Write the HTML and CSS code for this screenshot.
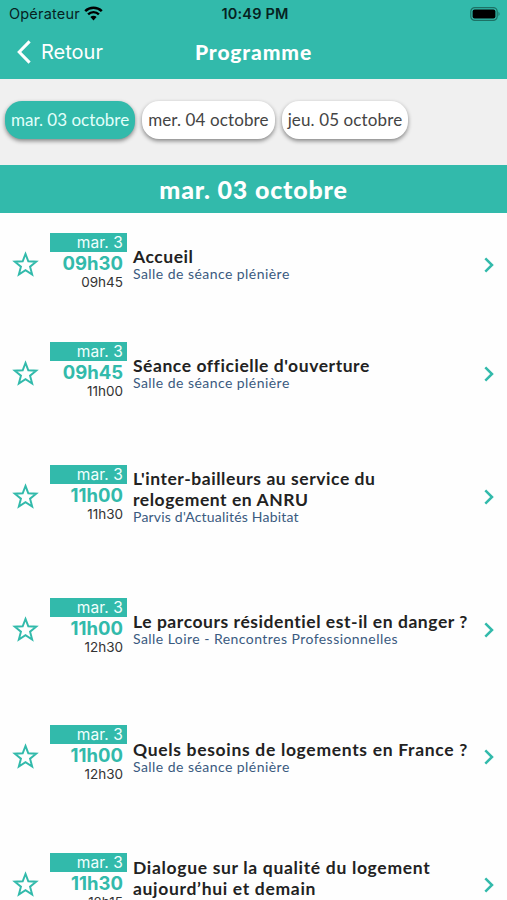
FILE: index.html
```
<!DOCTYPE html>
<html lang="fr">
<head>
<meta charset="utf-8">
<title>Programme</title>
<link rel="stylesheet" href="styles.css">
</head>
<body>

<svg class="defs" width="0" height="0">
  <symbol id="star" viewBox="0 0 26 26">
    <path d="M13 2.8 L15.7 9.9 L23.3 10.3 L17.4 15.1 L19.4 22.7 L13 18.5 L6.6 22.7 L8.6 15.1 L2.7 10.3 L10.3 9.9 Z" fill="none" stroke="currentColor" stroke-width="1.9"/>
  </symbol>
  <symbol id="chevron" viewBox="0 0 10 16">
    <path d="M1.3 1.4 L8 8 L1.3 14.6" fill="none" stroke="currentColor" stroke-width="2.5"/>
  </symbol>
</svg>

<header>
  <div class="status">
    <div class="carrier">
      <span>Opérateur</span>
      <svg width="19" height="15" viewBox="0 0 19 15">
        <path d="M1.2 5.1 A11.8 11.8 0 0 1 17.8 5.1" fill="none" stroke="#000" stroke-width="2.5"/>
        <path d="M4.1 8.4 A7.6 7.6 0 0 1 14.9 8.4" fill="none" stroke="#000" stroke-width="2.4"/>
        <path d="M9.5 14.4 L6.4 11.1 A4.4 4.4 0 0 1 12.6 11.1 Z" fill="#000"/>
      </svg>
    </div>
    <div class="clock">10:49 PM</div>
    <div class="battery">
      <svg width="31" height="14" viewBox="0 0 31 14">
        <rect x="0.8" y="0.6" width="26.4" height="12.8" rx="4" fill="none" stroke="#1d7165" stroke-width="1.2"/>
        <rect x="2.6" y="2.4" width="22.8" height="9.2" rx="2" fill="#000"/>
        <path d="M28.5 4.8 Q30.6 7 28.5 9.2 Z" fill="#1d7165"/>
      </svg>
    </div>
  </div>
  <nav>
    <a class="back">
      <svg width="16" height="24" viewBox="0 0 16 24">
        <path d="M14.6 1.4 L4.2 12 L14.6 22.6" fill="none" stroke="#fff" stroke-width="3"/>
      </svg>
      <span>Retour</span>
    </a>
    <h1>Programme</h1>
    <span></span>
  </nav>
</header>

<div class="days">
  <a class="day active">mar. 03 octobre</a>
  <a class="day">mer. 04 octobre</a>
  <a class="day">jeu. 05 octobre</a>
</div>

<h2>mar. 03 octobre</h2>

<ul class="sessions">
  <li>
    <svg class="star"><use href="#star"/></svg>
    <div class="slot">
      <div class="date">mar. 3</div>
      <div class="start">09h30</div>
      <div class="end">09h45</div>
    </div>
    <div class="info">
      <h3>Accueil</h3>
      <p>Salle de séance plénière</p>
    </div>
    <svg class="chevron"><use href="#chevron"/></svg>
  </li>
  <li>
    <svg class="star"><use href="#star"/></svg>
    <div class="slot">
      <div class="date">mar. 3</div>
      <div class="start">09h45</div>
      <div class="end">11h00</div>
    </div>
    <div class="info">
      <h3>Séance officielle d'ouverture</h3>
      <p>Salle de séance plénière</p>
    </div>
    <svg class="chevron"><use href="#chevron"/></svg>
  </li>
  <li>
    <svg class="star"><use href="#star"/></svg>
    <div class="slot">
      <div class="date">mar. 3</div>
      <div class="start">11h00</div>
      <div class="end">11h30</div>
    </div>
    <div class="info">
      <h3>L'inter-bailleurs au service du<br>relogement en ANRU</h3>
      <p class="narrow">Parvis d'Actualités Habitat</p>
    </div>
    <svg class="chevron"><use href="#chevron"/></svg>
  </li>
  <li>
    <svg class="star"><use href="#star"/></svg>
    <div class="slot">
      <div class="date">mar. 3</div>
      <div class="start">11h00</div>
      <div class="end">12h30</div>
    </div>
    <div class="info">
      <h3>Le parcours résidentiel est-il en danger ?</h3>
      <p>Salle Loire - Rencontres Professionnelles</p>
    </div>
    <svg class="chevron"><use href="#chevron"/></svg>
  </li>
  <li>
    <svg class="star"><use href="#star"/></svg>
    <div class="slot">
      <div class="date">mar. 3</div>
      <div class="start">11h00</div>
      <div class="end">12h30</div>
    </div>
    <div class="info">
      <h3 class="wide">Quels besoins de logements en France ?</h3>
      <p>Salle de séance plénière</p>
    </div>
    <svg class="chevron"><use href="#chevron"/></svg>
  </li>
  <li>
    <svg class="star"><use href="#star"/></svg>
    <div class="slot">
      <div class="date">mar. 3</div>
      <div class="start">11h30</div>
      <div class="end">12h15</div>
    </div>
    <div class="info last">
      <h3 class="wide">Dialogue sur la qualité du logement<br>aujourd’hui et demain</h3>
    </div>
    <svg class="chevron"><use href="#chevron"/></svg>
  </li>
</ul>

</body>
</html>
```
FILE: styles.css
```
* {
  box-sizing: border-box;
}
body {
  margin: 0;
  height: 900px;
  overflow: hidden;
  background-color: #fefefe;
  font-family: Lato, sans-serif;
  color: #222;
}
h1, h2, h3, p, ul {
  margin: 0;
  padding: 0;
}
.defs {
  display: block;
}
header {
  height: 79px;
  background-color: #32baab;
}
.status {
  display: grid;
  grid-template-columns: 1fr auto 1fr;
  align-items: center;
  height: 27px;
  padding: 0 6px 0 9px;
  font-family: Inter, sans-serif;
  font-size: 14.5px;
  letter-spacing: 0.2px;
  color: #06231f;
}
.carrier {
  display: flex;
  align-items: center;
  gap: 4px;
}
.clock {
  font-weight: 600;
}
.battery {
  display: flex;
  justify-content: flex-end;
}
nav {
  display: grid;
  grid-template-columns: 1fr auto 1fr;
  align-items: center;
  height: 50px;
  padding: 0 15px;
  color: #fff;
}
.back {
  display: flex;
  align-items: center;
  gap: 10px;
  font-family: Inter, sans-serif;
  font-size: 20px;
}
h1 {
  padding-bottom: 2px;
  font-size: 21px;
  font-weight: 900;
  letter-spacing: 0.9px;
}
.days {
  display: flex;
  gap: 7px;
  height: 86px;
  padding: 22px 5px 0;
  background-color: #f0f0f0;
}
.day {
  height: 38px;
  padding: 0 6px;
  border-radius: 17px;
  background-color: #fff;
  box-shadow: 0 2px 4px rgba(0, 0, 0, 0.45);
  font-size: 17px;
  line-height: 37px;
  letter-spacing: 0.12px;
  white-space: nowrap;
  color: #444;
}
.day.active {
  background-color: #32baab;
  letter-spacing: 0;
  color: #e2fffa;
}
h2 {
  height: 48px;
  background-color: #32baab;
  font-size: 25px;
  font-weight: 900;
  line-height: 49px;
  letter-spacing: 0.8px;
  text-align: center;
  color: #fff;
}
.sessions {
  list-style: none;
}
.sessions li {
  display: flex;
  align-items: center;
  height: 133px;
  padding: 0 13px 0 12px;
}
.sessions li:nth-child(1) {
  height: 103px;
}
.sessions li:nth-child(2) {
  height: 115px;
}
.sessions li:nth-child(3) {
  height: 132px;
}
.sessions li:nth-child(5) {
  height: 122px;
}
.star {
  flex: none;
  width: 27px;
  height: 27px;
  margin: 0 11px 1px 0;
  color: #32baab;
}
.slot {
  flex: none;
  width: 77px;
  height: 64px;
  font-family: Inter, sans-serif;
  text-align: right;
}
.slot div {
  padding-right: 4px;
}
.date {
  height: 19px;
  background-color: #32baab;
  font-size: 15.5px;
  line-height: 20px;
  letter-spacing: 0.1px;
  color: #f0fffd;
}
.start {
  font-size: 18.5px;
  font-weight: 700;
  line-height: 23px;
  color: #32baab;
}
.end {
  font-size: 13.5px;
  line-height: 15px;
  color: #333;
}
.info {
  flex: 1;
  padding: 0 0 3px 6px;
  white-space: nowrap;
}
.info.last {
  padding-bottom: 14px;
}
h3 {
  font-size: 17.5px;
  font-weight: 700;
  line-height: 21px;
  letter-spacing: 0.55px;
}
h3.wide {
  letter-spacing: 0.68px;
}
.info p {
  font-size: 14px;
  line-height: 13px;
  letter-spacing: 0.45px;
  color: #3a5a80;
}
.info p.narrow {
  letter-spacing: 0.2px;
}
.chevron {
  flex: none;
  width: 10px;
  height: 16px;
  color: #32baab;
}
```
